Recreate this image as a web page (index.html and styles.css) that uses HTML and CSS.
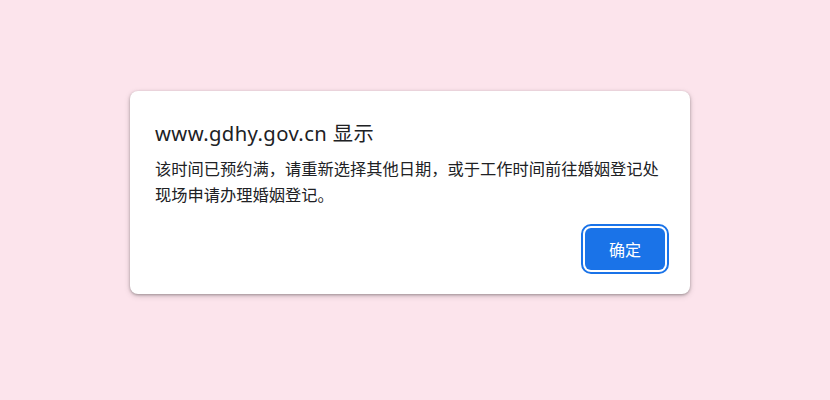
FILE: index.html
```html
<!DOCTYPE html>
<html lang="zh-CN">
<head>
<meta charset="utf-8">
<title>www.gdhy.gov.cn 显示</title>
<link rel="stylesheet" href="styles.css">
</head>
<body>
<div class="page">
  <div class="dialog" role="alertdialog">
    <div class="title">www.gdhy.gov.cn 显示</div>
    <div class="message">该时间已预约满，请重新选择其他日期，或于工作时间前往婚姻登记处现场申请办理婚姻登记。</div>
    <div class="actions">
      <button class="ok">确定</button>
    </div>
  </div>
</div>
</body>
</html>
```

FILE: styles.css
```css
html, body {
  margin: 0;
  padding: 0;
  background: #fce4ec;
}
.page {
  width: 830px;
  height: 400px;
  box-sizing: border-box;
  padding: 91px 0 0 130px;
}
.dialog {
  width: 560px;
  box-sizing: border-box;
  background: #ffffff;
  border-radius: 8px;
  box-shadow: 0 1px 3px rgba(0,0,0,0.3), 0 2px 6px rgba(0,0,0,0.15);
  padding: 29px 25px 24px 25px;
  color: #202124;
  font-family: "Noto Sans", "Noto Sans CJK SC", sans-serif;
}
.title {
  font-size: 20.25px;
  line-height: 26px;
  letter-spacing: 0.4px;
  margin-bottom: 10px;
}
.message {
  font-size: 16.25px;
  line-height: 26px;
}
.actions {
  display: flex;
  justify-content: flex-end;
  margin-top: 20px;
}
.ok {
  width: 80px;
  height: 42px;
  border: none;
  border-radius: 6px;
  background: #1a73e8;
  color: #ffffff;
  font-family: "Noto Sans CJK SC", sans-serif;
  font-size: 16px;
  outline: 2px solid #1a73e8;
  outline-offset: 2px;
}
```
